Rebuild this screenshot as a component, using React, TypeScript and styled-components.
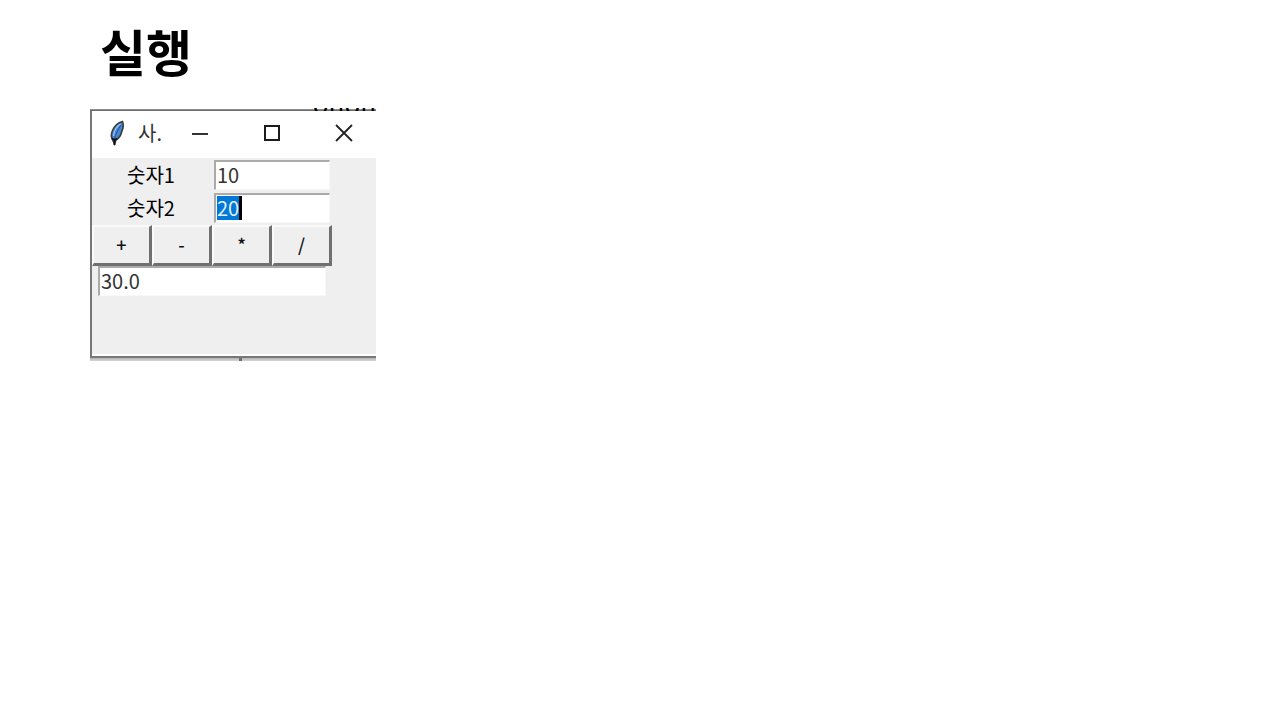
import React, { useState } from "react";
import styled, { createGlobalStyle, css } from "styled-components";

const GlobalStyle = createGlobalStyle`
  *, *::before, *::after { box-sizing: border-box; }
  body {
    margin: 0;
    background: #fff;
    color: #000;
    font-family: "Noto Sans CJK KR", "Noto Sans", sans-serif;
  }
`;

const Slide = styled.main`
  padding: 16px 90px;
`;

const Heading = styled.h1`
  margin: 0 0 24px;
  padding-left: 10px;
  font-size: 50px;
  line-height: 68px;
  font-weight: 700;
`;

const Capture = styled.section`
  max-width: 286px;
`;

const Backdrop = styled.div`
  display: flex;
  justify-content: flex-end;
  height: 3px;
  overflow: hidden;
  background: linear-gradient(#fff 0 1px, #8c8c8c 1px 2px, #6e6e6e 2px);
`;

const BackdropText = styled.span`
  display: flex;
  align-items: flex-end;
  height: 2px;
  font-size: 26px;
  line-height: 14px;
`;

const Shadow = styled.div`
  height: 3px;
  background: linear-gradient(90deg, transparent 149px, #707070 149px 152px, transparent 152px),
    linear-gradient(#b4b4b4, #d6d6d6);
`;

const Window = styled.div`
  border-left: 2px solid #777;
  border-bottom: 2px solid #777;
  background: #efefef;
`;

const TitleBar = styled.header`
  display: flex;
  align-items: center;
  height: 47px;
  padding: 0 12px 4px 16px;
  background: #fff;
`;

const Title = styled.span`
  flex: 1;
  padding-left: 10px;
  font-size: 20px;
  line-height: 30px;
  color: #333;
`;

const Controls = styled.div`
  display: flex;
  gap: 32px;
`;

const ControlButton = styled.button`
  display: flex;
  align-items: center;
  justify-content: center;
  width: 40px;
  height: 30px;
  padding: 0;
  border: 0;
  background: transparent;
`;

const Form = styled.form`
  display: grid;
  grid-template-columns: repeat(4, 60px);
  grid-template-rows: 33px 32px 41px 30px;
  align-items: start;
  height: 198px;
  padding-top: 2px;
  border-bottom: 2px solid #fff;
`;

const Label = styled.label`
  grid-column: span 2;
  padding-right: 2px;
  text-align: center;
  font-size: 20px;
  line-height: 30px;
`;

const Field = styled.input<{ $selected?: boolean; $wide?: boolean }>`
  grid-column: span ${(p) => (p.$wide ? 4 : 2)};
  justify-self: center;
  width: ${(p) => (p.$wide ? 228 : 116)}px;
  height: 30px;
  padding: 0 1px 2px;
  border: solid;
  border-width: 2px 1px 1px 2px;
  border-color: #aaa #f8f8f8 #f8f8f8 #aaa;
  border-radius: 0;
  outline: 0;
  background: #fff;
  color: #333;
  font-family: inherit;
  font-size: 20px;
  line-height: 24px;
  ${(p) =>
    p.$selected &&
    css`
      color: #e4effa;
      background: linear-gradient(90deg, #0078d7 22px, #000 22px) 1px 1px / 25px 24px no-repeat #fff;
    `}
`;

const OperatorButton = styled.button`
  height: 41px;
  padding: 0 0 2px;
  border: solid;
  border-width: 2px 3px 3px 2px;
  border-color: #fafafa #707070 #707070 #fafafa;
  border-radius: 0;
  background: #efefef;
  color: #111;
  font-family: inherit;
  font-size: 18px;
  font-weight: 500;
  line-height: 30px;
`;

const FeatherIcon = () => (
  <svg width="20" height="28" viewBox="0 0 20 28" aria-hidden="true">
    <path
      d="M14.5 2.5C10.5 3.500 6.500 7 4.500 11.500C3 15 3 18 4.500 20.500L6.500 25L8 21C11.500 19 13 16 13.800 12.500C15 9.500 16.200 6 14.500 2.500Z"
      fill="#4387d6"
      stroke="#3c3c3c"
      strokeWidth="1.600"
    />
    <path d="M12.500 5C9 7 6 12 5.500 17" fill="none" stroke="#9cc6f0" strokeWidth="1.200" />
    <path d="M13 6C10 11 7.500 15 6.500 20" fill="none" stroke="#24528c" strokeWidth="1" />
    <path d="M4 19.500L6.500 21L9 19.500M6.500 20V26" fill="none" stroke="#10141a" strokeWidth="2" />
  </svg>
);

const MinimizeIcon = () => (
  <svg width="18" height="18" viewBox="0 0 18 18" aria-hidden="true">
    <path d="M1 10H17" stroke="#333" strokeWidth="2" />
  </svg>
);

const MaximizeIcon = () => (
  <svg width="18" height="18" viewBox="0 0 18 18" aria-hidden="true">
    <rect x="2" y="2" width="14" height="14" fill="none" stroke="#1c1c1c" strokeWidth="2" />
  </svg>
);

const CloseIcon = () => (
  <svg width="18" height="18" viewBox="0 0 18 18" aria-hidden="true">
    <path d="M1 1L17 17M17 1L1 17" fill="none" stroke="#222" strokeWidth="1.800" />
  </svg>
);

type Operator = "+" | "-" | "*" | "/";

const operations: Record<Operator, (a: number, b: number) => number> = {
  "+": (a, b) => a + b,
  "-": (a, b) => a - b,
  "*": (a, b) => a * b,
  "/": (a, b) => a / b,
};

const formatResult = (n: number) => (Number.isInteger(n) ? n.toFixed(1) : String(n));

export default function App() {
  const [first, setFirst] = useState("10");
  const [second, setSecond] = useState("20");
  const [result, setResult] = useState("30.0");
  const [selected, setSelected] = useState(true);

  const calculate = (op: Operator) =>
    setResult(formatResult(operations[op](Number(first), Number(second))));

  return (
    <>
      <GlobalStyle />
      <Slide>
        <Heading>실행</Heading>
        <Capture>
          <Backdrop aria-hidden="true">
            <BackdropText>onon</BackdropText>
          </Backdrop>
          <Window>
            <TitleBar>
              <FeatherIcon />
              <Title>사.</Title>
              <Controls>
                <ControlButton type="button" aria-label="최소화">
                  <MinimizeIcon />
                </ControlButton>
                <ControlButton type="button" aria-label="최대화">
                  <MaximizeIcon />
                </ControlButton>
                <ControlButton type="button" aria-label="닫기">
                  <CloseIcon />
                </ControlButton>
              </Controls>
            </TitleBar>
            <Form onSubmit={(e) => e.preventDefault()}>
              <Label htmlFor="first">숫자1</Label>
              <Field id="first" value={first} onChange={(e) => setFirst(e.target.value)} />
              <Label htmlFor="second">숫자2</Label>
              <Field
                id="second"
                $selected={selected}
                value={second}
                onFocus={() => setSelected(false)}
                onChange={(e) => setSecond(e.target.value)}
              />
              {(Object.keys(operations) as Operator[]).map((op) => (
                <OperatorButton key={op} type="button" onClick={() => calculate(op)}>
                  {op}
                </OperatorButton>
              ))}
              <Field $wide readOnly aria-label="결과" value={result} />
            </Form>
          </Window>
          <Shadow />
        </Capture>
      </Slide>
    </>
  );
}
